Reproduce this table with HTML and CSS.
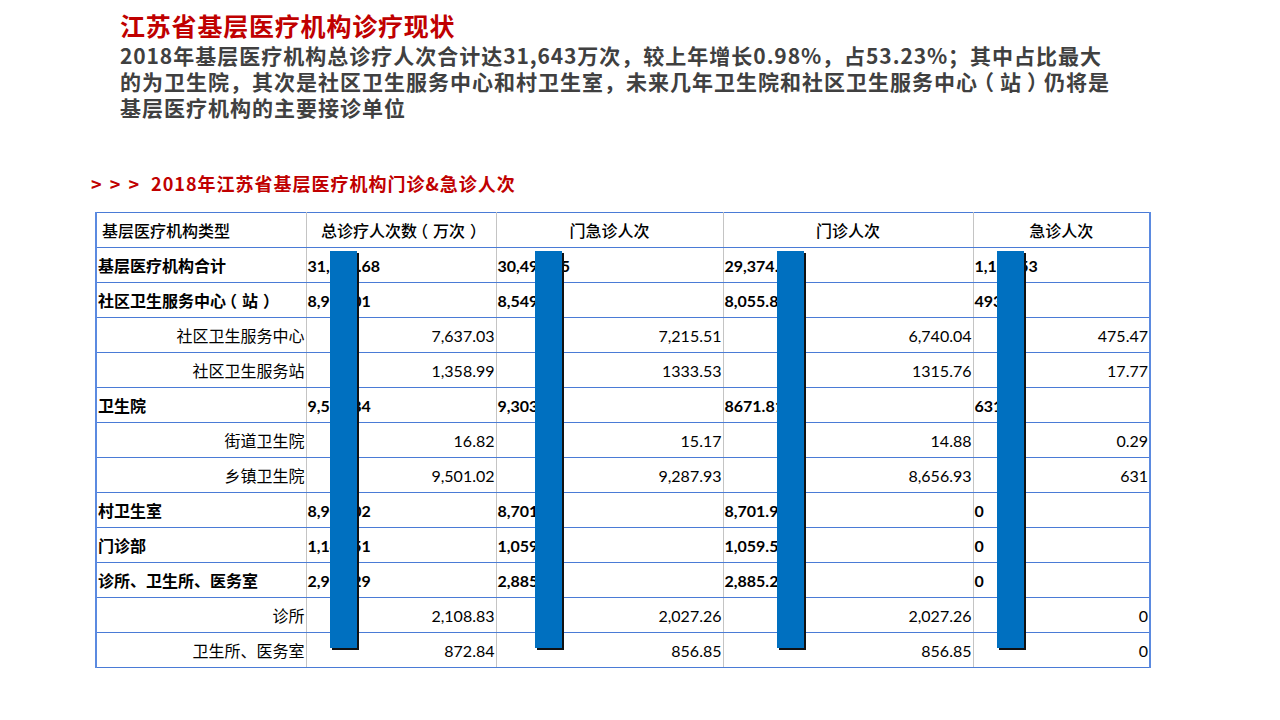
FILE: index.html
```html
<!DOCTYPE html>
<html lang="zh-CN">
<head>
<meta charset="utf-8">
<link rel="stylesheet" href="styles.css">
</head>
<body>
<div class="page">
  <header class="intro">
    <h1 class="title">江苏省基层医疗机构诊疗现状</h1>
    <p class="lead"><span class="num">2018</span>年基层医疗机构总诊疗人次合计达<span class="num">31,643</span>万次<span class="p">，</span>较上年增长<span class="num">0.98%</span><span class="p">，</span>占<span class="num">53.23%</span><span class="p">；</span>其中占比最大<br>的为卫生院<span class="p">，</span>其次是社区卫生服务中心和村卫生室<span class="p">，</span>未来几年卫生院和社区卫生服务中心<span class="pl">（</span>站<span class="pr">）</span>仍将是<br>基层医疗机构的主要接诊单位</p>
  </header>
  <h2 class="subtitle"><span class="arrows">&gt; &gt; &gt;</span>2018年江苏省基层医疗机构门诊&amp;急诊人次</h2>
  <div class="table-wrap">
    <table class="data">
      <colgroup>
        <col class="c1"><col class="c2"><col class="c3"><col class="c4"><col class="c5">
      </colgroup>
      <thead>
        <tr><th class="first">基层医疗机构类型</th><th>总诊疗人次数<span class="pl">（</span>万次<span class="pr">）</span></th><th>门急诊人次</th><th>门诊人次</th><th>急诊人次</th></tr>
      </thead>
      <tbody>
        <tr class="main"><td>基层医疗机构合计</td><td>31,643.68</td><td>30,491.85</td><td>29,374.32</td><td>1,117.53</td></tr>
        <tr class="main"><td>社区卫生服务中心<span class="pl">（</span>站<span class="pr">）</span></td><td>8,996.01</td><td>8,549.04</td><td>8,055.80</td><td>493.24</td></tr>
        <tr class="sub"><td>社区卫生服务中心</td><td>7,637.03</td><td>7,215.51</td><td>6,740.04</td><td>475.47</td></tr>
        <tr class="sub"><td>社区卫生服务站</td><td>1,358.99</td><td>1333.53</td><td>1315.76</td><td>17.77</td></tr>
        <tr class="main"><td>卫生院</td><td>9,517.84</td><td>9,303.10</td><td>8671.81</td><td>631.29</td></tr>
        <tr class="sub"><td>街道卫生院</td><td>16.82</td><td>15.17</td><td>14.88</td><td>0.29</td></tr>
        <tr class="sub"><td>乡镇卫生院</td><td>9,501.02</td><td>9,287.93</td><td>8,656.93</td><td>631</td></tr>
        <tr class="main"><td>村卫生室</td><td>8,901.02</td><td>8,701.97</td><td>8,701.97</td><td>0</td></tr>
        <tr class="main"><td>门诊部</td><td>1,146.51</td><td>1,059.54</td><td>1,059.54</td><td>0</td></tr>
        <tr class="main"><td>诊所、卫生所、医务室</td><td>2,981.29</td><td>2,885.20</td><td>2,885.20</td><td>0</td></tr>
        <tr class="sub"><td>诊所</td><td>2,108.83</td><td>2,027.26</td><td>2,027.26</td><td>0</td></tr>
        <tr class="sub"><td>卫生所、医务室</td><td>872.84</td><td>856.85</td><td>856.85</td><td>0</td></tr>
      </tbody>
    </table>
    <div class="bar b1"></div>
    <div class="bar b2"></div>
    <div class="bar b3"></div>
    <div class="bar b4"></div>
  </div>
</div>
</body>
</html>
```

FILE: styles.css
```css
html, body {
  margin: 0;
  padding: 0;
  background: #ffffff;
}
body {
  width: 1280px;
  height: 720px;
  overflow: hidden;
  font-family: "Noto Sans CJK SC", "Noto Sans", sans-serif;
}
.page {
  padding-top: 9px;
}
.intro {
  margin-left: 120px;
  width: 1100px;
}
.title {
  margin: 0;
  font-size: 25px;
  line-height: 33px;
  font-weight: 700;
  color: #c00000;
  letter-spacing: 0.8px;
}
.lead {
  margin: 0;
  font-size: 21px;
  line-height: 26px;
  font-weight: 700;
  color: #404040;
  letter-spacing: 1px;
  white-space: nowrap;
}
.num {
  letter-spacing: 0.9px;
}
.p {
  font-family: "Noto Sans CJK TC", "Noto Sans CJK SC", sans-serif;
}
.pl {
  display: inline-block;
  margin-left: -5px;
  margin-right: 5px;
}
.pr {
  display: inline-block;
  margin-left: 5px;
  margin-right: -5px;
}
.subtitle {
  margin: 51px 0 0 91px;
  font-size: 18px;
  line-height: 24px;
  font-weight: 700;
  color: #c00000;
  letter-spacing: 1px;
}
.arrows {
  word-spacing: 2px;
  margin-right: 11px;
}
.table-wrap {
  position: relative;
  margin: 17px 0 0 95px;
  width: 1054px;
}
.data {
  border-collapse: collapse;
  table-layout: fixed;
  width: 1054px;
  font-size: 16px;
  color: #000;
}
.c1 { width: 210px; }
.c2 { width: 190px; }
.c3 { width: 227px; }
.c4 { width: 250px; }
.c5 { width: 177px; }
.data th, .data td {
  height: 35px;
  padding: 0 1px;
  border-top: 1px solid #4a7bd6;
  border-bottom: 1px solid #4a7bd6;
  border-left: 1px solid #c4c4c4;
  border-right: 1px solid #c4c4c4;
  white-space: nowrap;
  overflow: hidden;
  box-sizing: border-box;
}
.data tr > :first-child { border-left: 2px solid #5b8ae0; }
.data tr > :last-child { border-right: 2px solid #5b8ae0; }
.data th {
  font-weight: 500;
  text-align: center;
}
.data th.first {
  text-align: left;
  padding-left: 5px;
}
.main td {
  font-weight: 700;
  text-align: left;
}
.main td:not(:first-child) {
  font-family: "Lato", "Noto Sans CJK SC", sans-serif;
  font-weight: 700;
  font-size: 16px;
}
.sub td {
  font-weight: 400;
  text-align: right;
}
.sub td:not(:first-child) {
  font-family: "Lato", "Noto Sans CJK SC", sans-serif;
  font-size: 16px;
}
.bar {
  position: absolute;
  top: 39px;
  width: 27px;
  height: 397px;
  background: #0070c0;
  box-shadow: 2px 2px 0 #111;
}
.b1 { left: 235px; }
.b2 { left: 440px; }
.b3 { left: 682px; }
.b4 { left: 902px; }
```
